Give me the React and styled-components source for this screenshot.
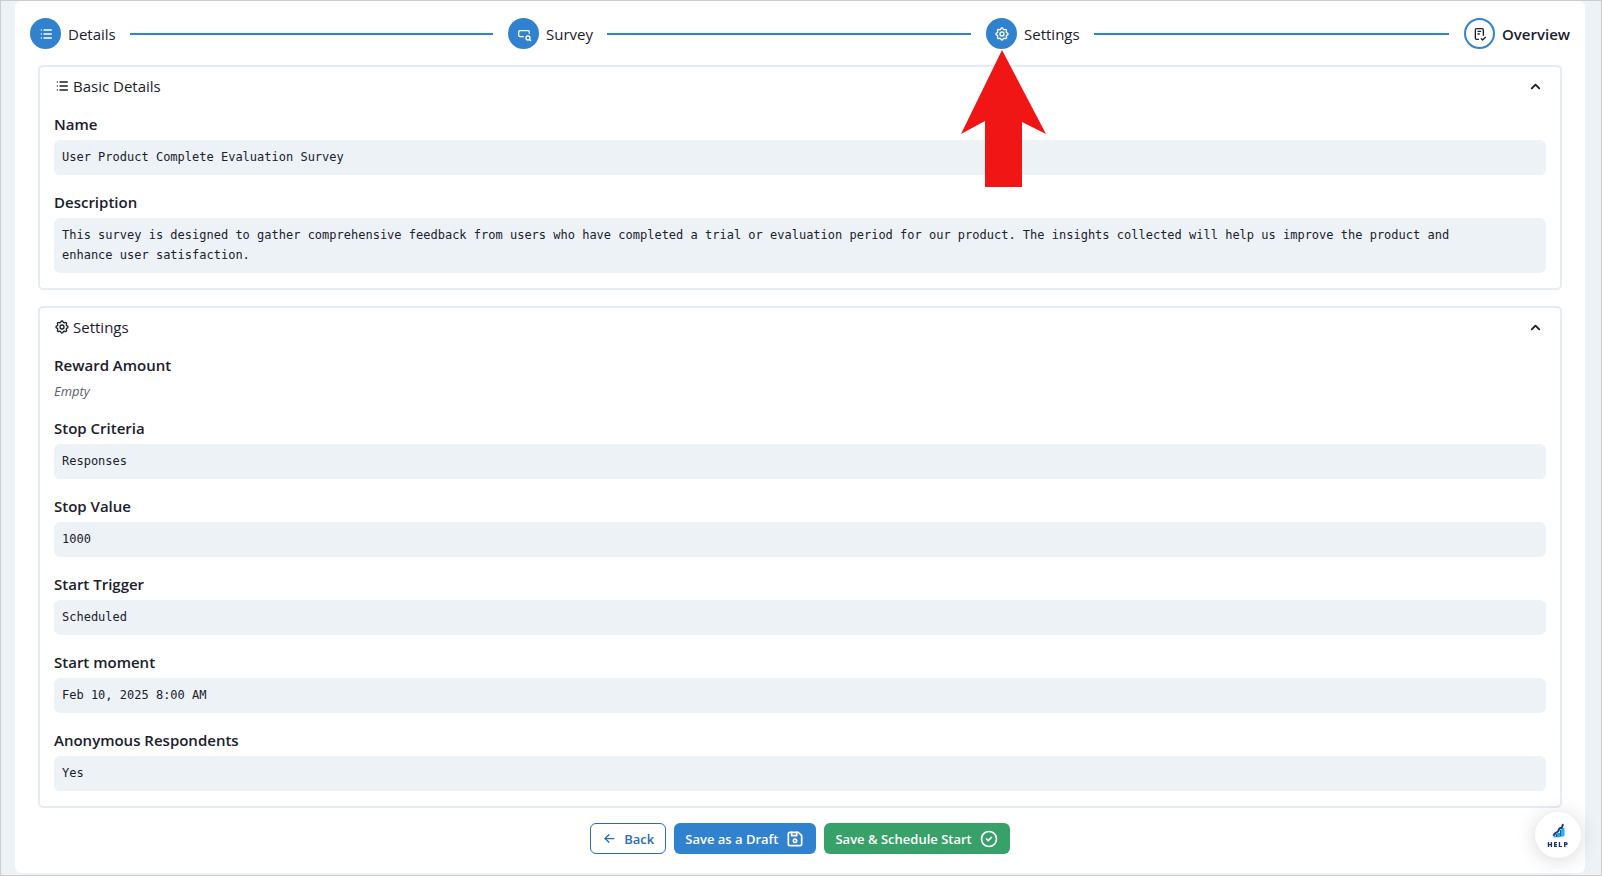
import { useState } from "react";
import styled, { createGlobalStyle, css } from "styled-components";
import {
  TbArrowLeft,
  TbChecklist,
  TbChevronUp,
  TbCircleCheck,
  TbDeviceFloppy,
  TbInputSearch,
  TbList,
  TbSettings,
} from "react-icons/tb";

const steps = [
  { label: "Details", icon: TbList },
  { label: "Survey", icon: TbInputSearch },
  { label: "Settings", icon: TbSettings, pointed: true },
  { label: "Overview", icon: TbChecklist, current: true },
];

const basicDetails = [
  { label: "Name", value: "User Product Complete Evaluation Survey" },
  {
    label: "Description",
    value:
      "This survey is designed to gather comprehensive feedback from users who have completed a trial or evaluation period for our product. The insights collected will help us improve the product and enhance user satisfaction.",
  },
];

const settings = [
  { label: "Reward Amount", value: "" },
  { label: "Stop Criteria", value: "Responses" },
  { label: "Stop Value", value: "1000" },
  { label: "Start Trigger", value: "Scheduled" },
  { label: "Start moment", value: "Feb 10, 2025 8:00 AM" },
  { label: "Anonymous Respondents", value: "Yes" },
];

const Section = ({ title, icon: Icon, fields }) => {
  const [open, setOpen] = useState(true);

  return (
    <Panel>
      <PanelHeader
        type="button"
        aria-expanded={open}
        onClick={() => setOpen(!open)}
      >
        <Icon size={16} />
        <PanelTitle>{title}</PanelTitle>
        <Chevron $open={open} size={15} strokeWidth={3} />
      </PanelHeader>

      {open && (
        <Fields>
          {fields.map(({ label, value }) => (
            <Field key={label}>
              <FieldLabel>{label}</FieldLabel>
              {value ? <FieldValue>{value}</FieldValue> : <Empty>Empty</Empty>}
            </Field>
          ))}
        </Fields>
      )}
    </Panel>
  );
};

const HelpLogo = () => (
  <svg width="13" height="15" viewBox="0 0 13 15" aria-hidden="true">
    <path d="M1.500 12.500h2.500v2H1.500z" fill="#22b5ee" />
    <path d="M5 10h3v4l-3 .5z" fill="#1fa3e6" />
    <path d="M9 5h3.500v8L9 14z" fill="#22b5ee" />
    <path
      d="M1.800 12L3.500 10L6 8.500L7.500 5.500L10 4.500L10.800 1.800"
      fill="none"
      stroke="#233a8c"
      strokeWidth="2"
      strokeLinecap="round"
      strokeLinejoin="round"
    />
    <path d="M8.500 7v6.500M4.500 11v3" stroke="#2457a8" />
  </svg>
);

const App = () => {
  return (
    <>
      <GlobalStyle />
      <Page>
        <Card>
          <Stepper>
            {steps.map(({ label, icon: Icon, current, pointed }) => (
              <Step key={label} aria-current={current ? "step" : undefined}>
                <StepCircle $current={current}>
                  <Icon size={16} />
                  {pointed && (
                    <Pointer viewBox="0 0 86 137" aria-hidden="true">
                      <path
                        d="M41 0L85 84L61 72V137H24V71L0 84Z"
                        fill="#f11616"
                      />
                    </Pointer>
                  )}
                </StepCircle>
                <StepLabel $current={current}>{label}</StepLabel>
                {!current && <StepLine />}
              </Step>
            ))}
          </Stepper>

          <Panels>
            <Section title="Basic Details" icon={TbList} fields={basicDetails} />
            <Section title="Settings" icon={TbSettings} fields={settings} />
          </Panels>

          <Actions>
            <OutlineButton type="button">
              <TbArrowLeft size={15} />
              Back
            </OutlineButton>
            <SolidButton type="button" $color="#3182ce">
              Save as a Draft
              <TbDeviceFloppy size={20} />
            </SolidButton>
            <SolidButton type="button" $color="#38a169">
              Save &amp; Schedule Start
              <TbCircleCheck size={20} />
            </SolidButton>
          </Actions>
        </Card>

        <HelpButton type="button">
          <HelpLogo />
          HELP
        </HelpButton>
      </Page>
    </>
  );
};

const GlobalStyle = createGlobalStyle`
  * {
    box-sizing: border-box;
  }

  body {
    margin: 0;
    color: #1a202c;
    background-color: #edf2f7;
    font-family: "Open Sans", "Noto Sans", sans-serif;
    font-size: 15px;
    line-height: 24px;
  }

  button {
    font-family: inherit;
    cursor: pointer;
  }
`;

const Page = styled.div`
  min-height: 100vh;
  padding: 0 16px 1px 14px;
  border: 1px solid #cccccc;
`;

const Card = styled.main`
  padding: 17px 15px 19px;
  border-radius: 6px;
  background-color: #ffffff;
`;

const Stepper = styled.ol`
  display: flex;
  gap: 15px;
  margin: 0;
  padding: 0;
  list-style: none;
`;

const Step = styled.li`
  display: flex;
  align-items: center;
  flex: 1;

  &:last-child {
    flex: none;
  }
`;

const StepCircle = styled.span`
  position: relative;
  display: flex;
  flex-shrink: 0;
  justify-content: center;
  align-items: center;
  width: 31px;
  height: 31px;
  border-radius: 50%;
  color: #ffffff;
  background-color: #3182ce;

  ${(p) =>
    p.$current &&
    css`
      border: 2px solid #3182ce;
      color: #1a202c;
      background-color: #ffffff;
    `}
`;

const Pointer = styled.svg`
  position: absolute;
  top: 32px;
  left: 50%;
  z-index: 1;
  width: 86px;
  height: 137px;
  margin-left: -41px;
`;

const StepLabel = styled.span`
  margin-left: 7px;
  font-weight: ${(p) => (p.$current ? 600 : 400)};
`;

const StepLine = styled.span`
  flex: 1;
  height: 2px;
  margin-left: 14px;
  background-color: #3182ce;
`;

const Panels = styled.div`
  display: flex;
  flex-direction: column;
  gap: 16px;
  padding: 16px 8px 15px;
`;

const Panel = styled.section`
  border: 2px solid #e6ecf3;
  border-radius: 5px;
`;

const PanelHeader = styled.button`
  display: flex;
  align-items: center;
  width: 100%;
  padding: 7px 17px 7px 14px;
  border: none;
  color: inherit;
  background: none;
  font-size: 15px;
  line-height: 24px;
  text-align: left;
`;

const PanelTitle = styled.span`
  flex: 1;
  margin-left: 3px;
`;

const Chevron = styled(TbChevronUp)`
  transform: ${(p) => (p.$open ? "none" : "rotate(180deg)")};
`;

const Fields = styled.dl`
  display: flex;
  flex-direction: column;
  gap: 15px;
  margin: 0;
  padding: 7px 14px 15px;
`;

const Field = styled.div`
  display: flex;
  flex-direction: column;
`;

const FieldLabel = styled.dt`
  margin-bottom: 4px;
  font-weight: 600;
  line-height: 24px;
`;

const FieldValue = styled.dd`
  margin: 0;
  padding: 7px 56px 8px 8px;
  border-radius: 6px;
  background-color: #edf2f7;
  font-family: "DejaVu Sans Mono", monospace;
  font-size: 12px;
  line-height: 20px;
`;

const Empty = styled.dd`
  margin: 0;
  color: #5b616b;
  font-size: 13px;
  font-style: italic;
  line-height: 20px;
`;

const Actions = styled.div`
  display: flex;
  justify-content: center;
  gap: 8px;
`;

const Button = styled.button`
  display: flex;
  align-items: center;
  gap: 7px;
  height: 31px;
  padding: 0 11px;
  border-radius: 6px;
  font-size: 13px;
  font-weight: 600;
  line-height: 20px;
`;

const OutlineButton = styled(Button)`
  border: 1px solid #2b6cb0;
  color: #2b6cb0;
  background-color: #ffffff;
`;

const SolidButton = styled(Button)`
  border: none;
  color: #ffffff;
  background-color: ${(p) => p.$color};
`;

const HelpButton = styled.button`
  position: fixed;
  right: 21px;
  bottom: 18px;
  display: flex;
  flex-direction: column;
  justify-content: center;
  align-items: center;
  gap: 3px;
  width: 46px;
  height: 46px;
  padding: 0;
  border: none;
  border-radius: 50%;
  color: #1f2f6b;
  background-color: #ffffff;
  box-shadow: 0 2px 20px rgba(0, 0, 0, 0.16);
  font-size: 7px;
  font-weight: 800;
  letter-spacing: 1px;
  line-height: 7px;
`;

export default App;
